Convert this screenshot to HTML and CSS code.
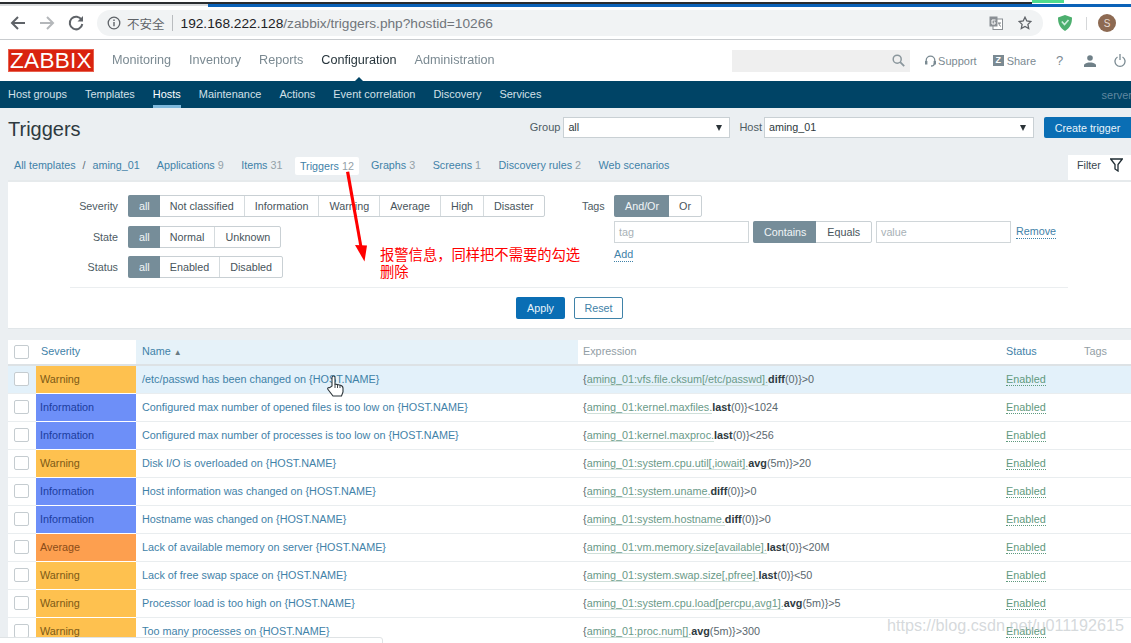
FILE: index.html
```html
<!DOCTYPE html>
<html lang="en">
<head>
<meta charset="utf-8">
<title>Triggers</title>
<link rel="stylesheet" href="styles.css">
</head>
<body>
<div class="page">
  <div class="strip"></div>
  <div class="toolbar">
    <svg class="tb-icon" width="18" height="18" viewBox="0 0 18 18"><path d="M16 9H3M9 3L3 9l6 6" fill="none" stroke="#5f6368" stroke-width="2"/></svg>
    <svg class="tb-icon forward" width="18" height="18" viewBox="0 0 18 18"><path d="M2 9h13M9 3l6 6-6 6" fill="none" stroke="#b4b7ba" stroke-width="2"/></svg>
    <svg class="tb-icon reload" width="18" height="18" viewBox="0 0 18 18"><path d="M14.6 6A6.3 6.3 0 1 0 15.300 10" fill="none" stroke="#5f6368" stroke-width="2"/><path d="M16 2v5.500h-5.500z" fill="#5f6368"/></svg>
    <div class="omnibox">
      <svg class="info" width="14" height="14" viewBox="0 0 14 14"><circle cx="7" cy="7" r="5.800" fill="none" stroke="#5f6368" stroke-width="1.300"/><path d="M7 6v4.200M7 3.600v1.300" stroke="#5f6368" stroke-width="1.400"/></svg>
      <span class="insecure">不安全</span>
      <span class="omni-sep"></span>
      <span class="url"><b>192.168.222.128</b>/zabbix/triggers.php?hostid=10266</span>
      <svg class="translate" width="14" height="14" viewBox="0 0 14 14"><rect x="4" y="3" width="9.500" height="10.500" fill="#fff" stroke="#8a8f94"/><rect x="0.500" y="0.500" width="8" height="10" fill="#8a8f94"/><path d="M6.500 4H3v4h3V6H4.800" fill="none" stroke="#fff"/><path d="M9 7h3M10 7c0 2 1 3 2 3.500" fill="none" stroke="#6a6f74" stroke-width=".9"/></svg>
      <svg class="star" width="14" height="14" viewBox="0 0 14 14"><path d="M7 1.200l1.800 3.800 4.100.5-3 2.900.8 4.100L7 10.500l-3.700 2 .8-4.100-3-2.900 4.100-.5z" fill="none" stroke="#5f6368" stroke-width="1.300"/></svg>
    </div>
    <svg class="shield" width="14" height="16" viewBox="0 0 14 16"><path d="M0 2.500L7 0l7 2.500C14 9 12 13 7 16 2 13 0 9 0 2.500z" fill="#4caf6e"/><path d="M3.800 6.500L6.500 9.500 10.500 5" fill="none" stroke="#cdeedd" stroke-width="1.600"/></svg>
    <span class="tb-sep"></span>
    <span class="avatar">S</span>
  </div>

  <header class="topbar">
    <div class="logo">ZABBIX</div>
    <nav class="mainnav">
      <a>Monitoring</a><a>Inventory</a><a>Reports</a><a class="current">Configuration</a><a>Administration</a>
    </nav>
    <div class="search">
      <svg width="13" height="13" viewBox="0 0 13 13"><circle cx="5.200" cy="5.200" r="4" fill="none" stroke="#8a969c" stroke-width="1.500"/><path d="M8.200 8.200l4 4" stroke="#8a969c" stroke-width="1.800"/></svg>
    </div>
    <a class="toplink support"><svg width="11" height="12" viewBox="0 0 11 12"><path d="M1.200 7V5.500a4.300 4.300 0 0 1 8.600 0V7M9.500 8c0 2-1.500 3-3.500 3" fill="none" stroke="#7a8a92" stroke-width="1.300"/><rect x="0" y="6" width="2.400" height="3.500" fill="#7a8a92"/><rect x="8.600" y="6" width="2.400" height="3.500" fill="#7a8a92"/></svg>Support</a>
    <a class="toplink share"><span class="zbox">Z</span>Share</a>
    <span class="help">?</span>
    <svg class="user" width="12" height="12" viewBox="0 0 12 12"><circle cx="6" cy="3" r="2.800" fill="#6f8088"/><path d="M0 12V9.800C1 8 4 7.500 6 7.500s5 .5 6 2.300V12z" fill="#6f8088"/></svg>
    <svg class="power" width="12" height="13" viewBox="0 0 12 13"><path d="M3.500 3a5 5 0 1 0 5 0M6 0v6" fill="none" stroke="#7a8a92" stroke-width="1.300"/></svg>
  </header>

  <nav class="subnav">
    <a>Host groups</a><a>Templates</a><a class="selected">Hosts</a><a>Maintenance</a><a>Actions</a><a>Event correlation</a><a>Discovery</a><a>Services</a>
    <span class="server">server</span>
  </nav>

  <main class="content">
    <div class="titlerow">
      <h1>Triggers</h1>
      <div class="controls">
        <label>Group</label>
        <div class="select group-select">all<i></i></div>
        <label class="host-label">Host</label>
        <div class="select host-select">aming_01<i></i></div>
        <button class="btn-primary create">Create trigger</button>
      </div>
    </div>

    <div class="tabsrow">
      <div class="tabs">
        <a class="crumb">All templates</a><span class="slash">/</span><a class="crumb host">aming_01</a>
        <a class="tab">Applications <em>9</em></a>
        <a class="tab">Items <em>31</em></a>
        <a class="tab active">Triggers <em>12</em></a>
        <a class="tab">Graphs <em>3</em></a>
        <a class="tab">Screens <em>1</em></a>
        <a class="tab">Discovery rules <em>2</em></a>
        <a class="tab">Web scenarios</a>
      </div>
      <div class="filter-tab">Filter
        <svg width="13" height="14" viewBox="0 0 13 14"><path d="M.7 1h11.600L8 6.500V13L5 11V6.500z" fill="none" stroke="#1f2c33" stroke-width="1.300"/></svg>
      </div>
    </div>

    <section class="filter">
      <div class="filter-cols">
        <div class="filter-left">
          <div class="frow"><label>Severity</label>
            <div class="seg"><span class="on">all</span><span>Not classified</span><span>Information</span><span>Warning</span><span>Average</span><span>High</span><span>Disaster</span></div>
          </div>
          <div class="frow"><label>State</label>
            <div class="seg"><span class="on">all</span><span>Normal</span><span>Unknown</span></div>
          </div>
          <div class="frow"><label>Status</label>
            <div class="seg"><span class="on">all</span><span>Enabled</span><span>Disabled</span></div>
          </div>
        </div>
        <div class="filter-right">
          <label class="tags-label">Tags</label>
          <div class="tags-body">
            <div class="seg"><span class="on">And/Or</span><span>Or</span></div>
            <div class="tag-row">
              <div class="input w135">tag</div>
              <div class="seg"><span class="on">Contains</span><span>Equals</span></div>
              <div class="input w135">value</div>
              <a class="dotted remove">Remove</a>
            </div>
            <a class="dotted add">Add</a>
          </div>
        </div>
      </div>
      <div class="divider"></div>
      <div class="actions">
        <button class="btn-primary apply">Apply</button>
        <button class="btn-reset">Reset</button>
      </div>
    </section>

    <table class="triggers">
      <colgroup><col class="c-check"><col class="c-sev"><col class="c-name"><col class="c-exp"><col class="c-status"><col class="c-tags"></colgroup>
      <thead>
        <tr>
          <th><span class="cb"></span></th>
          <th class="thlink">Severity</th>
          <th class="thlink sorted">Name <small>▲</small></th>
          <th>Expression</th>
          <th class="thlink">Status</th>
          <th>Tags</th>
        </tr>
      </thead>
      <tbody>
        <tr class="hover"><td><span class="cb"></span></td><td class="warning">Warning</td><td class="name">/etc/passwd has been changed on {HOST.NAME}</td><td class="exp">{<u>aming_01:vfs.file.cksum[/etc/passwd].</u><b>diff</b>(0)}&gt;0</td><td><a class="enabled">Enabled</a></td><td></td></tr>
        <tr><td><span class="cb"></span></td><td class="information">Information</td><td class="name">Configured max number of opened files is too low on {HOST.NAME}</td><td class="exp">{<u>aming_01:kernel.maxfiles.</u><b>last</b>(0)}&lt;1024</td><td><a class="enabled">Enabled</a></td><td></td></tr>
        <tr><td><span class="cb"></span></td><td class="information">Information</td><td class="name">Configured max number of processes is too low on {HOST.NAME}</td><td class="exp">{<u>aming_01:kernel.maxproc.</u><b>last</b>(0)}&lt;256</td><td><a class="enabled">Enabled</a></td><td></td></tr>
        <tr><td><span class="cb"></span></td><td class="warning">Warning</td><td class="name">Disk I/O is overloaded on {HOST.NAME}</td><td class="exp">{<u>aming_01:system.cpu.util[,iowait].</u><b>avg</b>(5m)}&gt;20</td><td><a class="enabled">Enabled</a></td><td></td></tr>
        <tr><td><span class="cb"></span></td><td class="information">Information</td><td class="name">Host information was changed on {HOST.NAME}</td><td class="exp">{<u>aming_01:system.uname.</u><b>diff</b>(0)}&gt;0</td><td><a class="enabled">Enabled</a></td><td></td></tr>
        <tr><td><span class="cb"></span></td><td class="information">Information</td><td class="name">Hostname was changed on {HOST.NAME}</td><td class="exp">{<u>aming_01:system.hostname.</u><b>diff</b>(0)}&gt;0</td><td><a class="enabled">Enabled</a></td><td></td></tr>
        <tr><td><span class="cb"></span></td><td class="average">Average</td><td class="name">Lack of available memory on server {HOST.NAME}</td><td class="exp">{<u>aming_01:vm.memory.size[available].</u><b>last</b>(0)}&lt;20M</td><td><a class="enabled">Enabled</a></td><td></td></tr>
        <tr><td><span class="cb"></span></td><td class="warning">Warning</td><td class="name">Lack of free swap space on {HOST.NAME}</td><td class="exp">{<u>aming_01:system.swap.size[,pfree].</u><b>last</b>(0)}&lt;50</td><td><a class="enabled">Enabled</a></td><td></td></tr>
        <tr><td><span class="cb"></span></td><td class="warning">Warning</td><td class="name">Processor load is too high on {HOST.NAME}</td><td class="exp">{<u>aming_01:system.cpu.load[percpu,avg1].</u><b>avg</b>(5m)}&gt;5</td><td><a class="enabled">Enabled</a></td><td></td></tr>
        <tr><td><span class="cb"></span></td><td class="warning">Warning</td><td class="name">Too many processes on {HOST.NAME}</td><td class="exp">{<u>aming_01:proc.num[].</u><b>avg</b>(5m)}&gt;300</td><td><a class="enabled">Enabled</a></td><td></td></tr>
      </tbody>
    </table>
  </main>

  <svg class="arrow" width="30" height="95" viewBox="0 0 30 95"><path d="M4 1l3.200-.5L20.500 76h-3z" fill="#f00"/><path d="M13 74l12 .5-2.500 16z" fill="#f00"/></svg>
  <p class="note">报警信息，同样把不需要的勾选<br>删除</p>
  <svg class="hand" width="17" height="22" viewBox="0 0 17 22"><path d="M5 11V2.500a1.500 1.500 0 0 1 3 0V9l5.500 1.300c1.500.4 2.500 1 2.500 3V17l-1.500 4H6L1 14.500c-.8-1 .3-2.600 1.700-1.800z" fill="#fff" stroke="#2b3338" stroke-width="1.100"/><path d="M8 9v4M10.500 9.600V13M13 10.200V13" stroke="#2b3338" stroke-width=".9"/></svg>
  <div class="statusbar"></div>
  <div class="watermark">https://blog.csdn.net/u011192615</div>
</div>
</body>
</html>
```

FILE: styles.css
```css
* { box-sizing: border-box; }
html, body { margin: 0; padding: 0; }
body { font-family: "Liberation Sans", Arial, sans-serif; font-size: 10.750px; color: #1f2c33; background: #fff; }
a { cursor: pointer; }
.page { position: relative; width: 1131px; height: 643px; overflow: hidden; display: flex; flex-direction: column; filter: blur(0.35px); }

/* browser chrome */
.strip {
  height: 7px; flex: none; background-color: #fff; background-repeat: no-repeat;
  background-image: linear-gradient(#2a2d30, #2a2d30), linear-gradient(#4fdc8c, #4fdc8c), linear-gradient(#0b62b8, #0b62b8), linear-gradient(#d9dbdd, #d9dbdd);
  background-size: 1032px 2px, 32px 3px, 923px 3px, 208px 2px;
  background-position: 0 2px, 1032px 0, 208px 4px, 0 4px;
}
.toolbar { height: 33px; flex: none; display: flex; align-items: center; padding-left: 9px; border-bottom: 1px solid #c9cccf; background: #fff; }
.tb-icon { flex: none; }
.forward { margin-left: 11px; }
.reload { margin-left: 11px; }
.omnibox { margin-left: 12px; width: 946px; height: 26px; background: #f1f3f4; border-radius: 13px; display: flex; align-items: center; padding-left: 10px; }
.info { flex: none; }
.insecure { margin-left: 6px; font-family: "Noto Sans CJK SC", sans-serif; font-size: 12.500px; color: #5f6368; }
.omni-sep { width: 1px; height: 16px; background: #b9bcbf; margin: 0 8px 0 7px; }
.url { font-size: 13.700px; color: #70757a; }
.url b { font-weight: normal; color: #202124; }
.translate { margin-left: auto; }
.star { margin: 0 11px 0 15px; }
.shield { margin-left: 15px; flex: none; }
.tb-sep { width: 1px; height: 13px; background: #d5d7d9; margin-left: 14px; }
.avatar { margin-left: 11px; width: 18px; height: 18px; border-radius: 50%; background: #8d6a52; color: #e8dcd2; font-size: 10px; display: flex; align-items: center; justify-content: center; }

/* zabbix header */
.topbar { height: 41px; flex: none; display: flex; align-items: center; padding-left: 8px; background: #fff; }
.logo { width: 86px; height: 23px; background: #d9230f; color: #fff; font-size: 22.500px; line-height: 23px; text-align: center; letter-spacing: .3px; box-shadow: inset 0 0 0 1px #e8604e; }
.mainnav { display: flex; gap: 18px; margin-left: 18px; margin-top: -2px; font-size: 12.650px; color: #7b8a92; position: relative; }
.mainnav .current { color: #27353c; position: relative; }
.mainnav .current::after { content: ""; position: absolute; left: 32px; top: 24px; border: 6px solid transparent; border-bottom: 6px solid #004466; border-top: 0; }
.search { margin-left: auto; width: 178px; height: 22px; background: #efefef; display: flex; align-items: center; justify-content: flex-end; padding-right: 5px; }
.toplink { display: flex; align-items: center; font-size: 11px; color: #7b8a92; }
.support { margin-left: 15px; gap: 2px; }
.support svg { flex: none; }
.share { margin-left: 16px; gap: 3px; }
.zbox { width: 11px; height: 11px; background: #7b8a92; color: #fff; font-size: 9px; font-weight: bold; line-height: 11px; text-align: center; }
.help { margin-left: 20px; width: 8px; font-size: 13px; color: #7b8a92; }
.user { margin-left: 20px; flex: none; }
.power { margin-left: 18px; margin-right: 5px; flex: none; }

.subnav { height: 27px; flex: none; display: flex; align-items: center; gap: 18px; padding-left: 8px; background: #004466; color: #d3e0e8; font-size: 10.950px; position: relative; }
.subnav a { display: block; line-height: 27px; height: 27px; }
.subnav .selected { color: #fff; box-shadow: inset 0 -3px 0 #7fb9dc; }
.server { margin-left: auto; margin-right: -1px; color: #5f87a0; }

/* content */
.content { flex: 1; background: #ebeff2; display: flex; flex-direction: column; min-height: 0; }
.titlerow { height: 42px; flex: none; display: flex; justify-content: space-between; padding-top: 9px; padding-left: 8px; }
h1 { margin: 0; font-size: 20px; font-weight: normal; line-height: 24px; color: #2e3a40; }
.controls { display: flex; align-items: flex-start; color: #4d5b63; }
.controls label { font-size: 11px; line-height: 21px; margin-right: 3px; }
.controls .host-label { margin-left: 9px; margin-right: 2px; }
.select { height: 21px; background: #fff; border: 1px solid #c9d0d4; line-height: 19px; padding-left: 4px; position: relative; color: #2e3a40; }
.select i { position: absolute; right: 7px; top: 7px; border: 3.500px solid transparent; border-top: 6px solid #2b3338; border-bottom: 0; }
.group-select { width: 167px; }
.host-select { width: 270px; }
.btn-primary { border: 0; border-radius: 2px; background: #0a6eb4; color: #e8f3fa; font: 10.750px "Liberation Sans", Arial, sans-serif; padding: 0; }
.create { margin-left: 10px; width: 87px; height: 21px; border-radius: 2px 0 0 2px; }

.tabsrow { height: 30px; flex: none; display: flex; justify-content: space-between; padding-left: 14px; }
.tabs { display: flex; align-items: flex-start; padding-top: 6px; color: #3f82a8; }
.tabs a { line-height: 18px; white-space: nowrap; }
.slash { line-height: 18px; margin: 0 7px; color: #5d6b73; }
.crumb.host { margin-right: 17px; }
.tab { margin-right: 17.500px; }
.tab em { font-style: normal; color: #94a1a8; }
.tab.active { background: #fff; padding: 0 5px; margin: 1px 12px 0 -5px; border-radius: 2px; }
.filter-tab { width: 63px; height: 25px; margin-top: 5px; background: #fff; display: flex; align-items: center; justify-content: space-between; padding: 0 8px 5px 9px; color: #3a474e; }

.filter { height: 149px; flex: none; margin-left: 8px; background: #fff; padding-top: 15px; box-shadow: inset 0 2px 0 #e6eaec, inset 0 -1px 0 #e1e6e9; }
.filter-cols { display: flex; height: 92px; }
.filter-left { width: 574px; flex: none; }
.frow { display: flex; align-items: center; gap: 10px; margin-bottom: 8.500px; }
.frow label { width: 110px; text-align: right; color: #4d5b63; }
.seg { display: inline-flex; height: 22px; border: 1px solid #c9d0d4; border-radius: 2px; background: #fff; color: #47545b; flex: none; }
.seg span { padding: 0 10px; line-height: 20px; border-left: 1px solid #d5dbde; }
.seg span:first-child { border-left: 0; }
.seg span.on { background: #768d99; color: #f1f5f7; margin: -1px 0 -1px -1px; padding: 1px 10px 1px 11px; border-radius: 2px 0 0 2px; }
.seg span.on + span { border-left: 0; }
.filter-right { display: flex; gap: 9px; }
.tags-label { width: 23px; line-height: 22px; color: #4d5b63; }
.tags-body { display: flex; flex-direction: column; align-items: flex-start; }
.tag-row { display: flex; align-items: center; gap: 4px; margin-top: 4px; }
.tag-row .seg { width: 119px; }
.tag-row .seg span + span { flex: 1; text-align: center; padding: 0; }
.input { height: 22px; border: 1px solid #d0d6d9; background: #fff; color: #a8b1b6; line-height: 20px; padding-left: 4px; }
.w135 { width: 135px; }
.dotted { color: #3f82a8; border-bottom: 1px dotted #3f82a8; line-height: 13px; }
.remove { margin-left: 1px; }
.add { margin-top: 5px; }
.divider { height: 1px; margin: 0 63px 0 62px; background: #ebeef0; }
.actions { display: flex; justify-content: center; gap: 9px; padding-top: 9px; }
.apply { width: 49px; height: 22px; }
.btn-reset { width: 49px; height: 22px; background: #fff; border: 1px solid #3f82a8; border-radius: 2px; color: #3f82a8; font: 10.750px "Liberation Sans", Arial, sans-serif; padding: 0; }

/* table */
.triggers { flex: none; margin: 11px 0 0 8px; width: 1123px; table-layout: fixed; border-collapse: collapse; background: #fff; font-size: 10.820px; }
.c-check { width: 28px; } .c-sev { width: 100px; } .c-name { width: 442px; } .c-exp { width: 423px; } .c-status { width: 78px; } .c-tags { width: 52px; }
.triggers th { height: 25px; font-weight: normal; text-align: left; padding: 0 5px 2px; color: #929ea5; border-bottom: 2px solid #dde2e5; }
.triggers th.thlink { color: #3f82a8; }
.triggers th.sorted { background: #e6f2f9; padding-left: 6px; }
.triggers th small { font-size: 8px; color: #6b7a82; }
.triggers td { height: 28px; padding: 0 5px; border-bottom: 1px solid #e9edef; white-space: nowrap; overflow: hidden; color: #6d7b82; }
.triggers th:first-child, .triggers td:first-child { padding: 0 0 0 6px; }
.cb { display: block; width: 15px; height: 14px; border: 1px solid #c5ccd0; border-radius: 2px; background: #fff; }
.triggers td.warning { background: #fec14f; color: #7d5a16; padding-left: 4px; border-bottom-color: #fff; }
.triggers td.information { background: #6d8ff8; color: #1c3d9e; padding-left: 4px; border-bottom-color: #fff; }
.triggers td.average { background: #fd9f4f; color: #8a4c18; padding-left: 4px; border-bottom-color: #fff; }
.triggers td.name { color: #3f82a8; padding-left: 6px; }
.triggers td.exp { color: #5b686f; }
.exp u { color: #6a9a88; text-decoration: none; border-bottom: 1px solid #cfdfd9; }
.exp b { color: #2e3a40; }
.enabled { color: #5f9a7e; border-bottom: 1px dotted #5f9a7e; }
.hover td { background: #e3f1fa; }

/* overlays */
.arrow { position: absolute; left: 342px; top: 171px; }
.note { position: absolute; left: 380px; top: 245px; margin: 0; color: #f00; font: 14.300px/17px "Noto Sans CJK SC", sans-serif; }
.hand { position: absolute; left: 327px; top: 375px; }
.statusbar { position: absolute; left: -4px; top: 637px; width: 387px; height: 12px; background: #fff; border: 1px solid #dfe3e5; border-radius: 3px; }
.watermark { position: absolute; left: 887px; top: 614px; font-size: 16.200px; line-height: 22px; color: rgba(190, 196, 200, .65); white-space: nowrap; }
```
